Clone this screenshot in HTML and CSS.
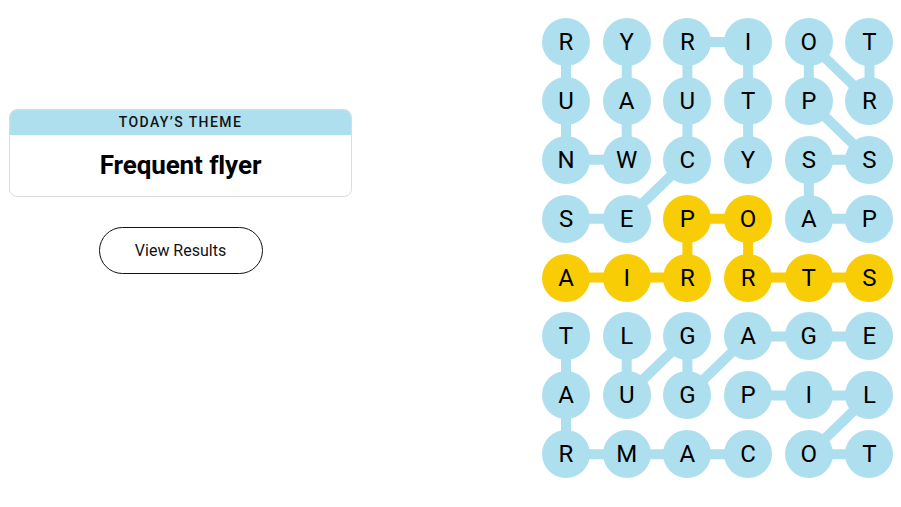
FILE: index.html
```html
<!DOCTYPE html>
<html lang="en">
<head>
<meta charset="utf-8">
<title>Strands</title>
<link rel="stylesheet" href="styles.css">
</head>
<body>
<main class="layout">
  <section class="side">
    <div class="theme-card">
      <div class="theme-head">Today’s Theme</div>
      <div class="theme-body">Frequent flyer</div>
    </div>
    <button class="results-btn" type="button">View Results</button>
  </section>

  <section class="board">
    <svg class="links" width="351.5" height="460.3" viewBox="0 0 351.5 460.3" aria-hidden="true">
      <g class="blue">
        <!-- RUNWAY -->
        <line x1="24" y1="24" x2="24" y2="82.9"/>
        <line x1="24" y1="82.9" x2="24" y2="141.8"/>
        <line x1="24" y1="141.8" x2="84.7" y2="141.8"/>
        <line x1="84.7" y1="141.8" x2="84.7" y2="82.9"/>
        <line x1="84.7" y1="82.9" x2="84.7" y2="24"/>
        <!-- SECURITY -->
        <line x1="24" y1="200.7" x2="84.7" y2="200.7"/>
        <line x1="84.7" y1="200.7" x2="145.4" y2="141.8"/>
        <line x1="145.4" y1="141.8" x2="145.4" y2="82.9"/>
        <line x1="145.4" y1="82.9" x2="145.4" y2="24"/>
        <line x1="145.4" y1="24" x2="206.1" y2="24"/>
        <line x1="206.1" y1="24" x2="206.1" y2="82.9"/>
        <line x1="206.1" y1="82.9" x2="206.1" y2="141.8"/>
        <!-- PASSPORT -->
        <line x1="327.5" y1="200.7" x2="266.8" y2="200.7"/>
        <line x1="266.8" y1="200.7" x2="266.8" y2="141.8"/>
        <line x1="266.8" y1="141.8" x2="327.5" y2="141.8"/>
        <line x1="327.5" y1="141.8" x2="266.8" y2="82.9"/>
        <line x1="266.8" y1="82.9" x2="266.8" y2="24"/>
        <line x1="266.8" y1="24" x2="327.5" y2="82.9"/>
        <line x1="327.5" y1="82.9" x2="327.5" y2="24"/>
        <!-- TARMAC -->
        <line x1="24" y1="318.5" x2="24" y2="377.4"/>
        <line x1="24" y1="377.4" x2="24" y2="436.3"/>
        <line x1="24" y1="436.3" x2="84.7" y2="436.3"/>
        <line x1="84.7" y1="436.3" x2="145.4" y2="436.3"/>
        <line x1="145.4" y1="436.3" x2="206.1" y2="436.3"/>
        <!-- LUGGAGE -->
        <line x1="84.7" y1="318.5" x2="84.7" y2="377.4"/>
        <line x1="84.7" y1="377.4" x2="145.4" y2="318.5"/>
        <line x1="145.4" y1="318.5" x2="145.4" y2="377.4"/>
        <line x1="145.4" y1="377.4" x2="206.1" y2="318.5"/>
        <line x1="206.1" y1="318.5" x2="266.8" y2="318.5"/>
        <line x1="266.8" y1="318.5" x2="327.5" y2="318.5"/>
        <!-- PILOT -->
        <line x1="206.1" y1="377.4" x2="266.8" y2="377.4"/>
        <line x1="266.8" y1="377.4" x2="327.5" y2="377.4"/>
        <line x1="327.5" y1="377.4" x2="266.8" y2="436.3"/>
        <line x1="266.8" y1="436.3" x2="327.5" y2="436.3"/>
      </g>
      <g class="gold">
        <!-- AIRPORTS -->
        <line x1="24" y1="259.6" x2="84.7" y2="259.6"/>
        <line x1="84.7" y1="259.6" x2="145.4" y2="259.6"/>
        <line x1="145.4" y1="259.6" x2="145.4" y2="200.7"/>
        <line x1="145.4" y1="200.7" x2="206.1" y2="200.7"/>
        <line x1="206.1" y1="200.7" x2="206.1" y2="259.6"/>
        <line x1="206.1" y1="259.6" x2="266.8" y2="259.6"/>
        <line x1="266.8" y1="259.6" x2="327.5" y2="259.6"/>
      </g>
    </svg>
    <div class="grid">
      <span class="cell">R</span><span class="cell">Y</span><span class="cell">R</span><span class="cell">I</span><span class="cell">O</span><span class="cell">T</span>
      <span class="cell">U</span><span class="cell">A</span><span class="cell">U</span><span class="cell">T</span><span class="cell">P</span><span class="cell">R</span>
      <span class="cell">N</span><span class="cell">W</span><span class="cell">C</span><span class="cell">Y</span><span class="cell">S</span><span class="cell">S</span>
      <span class="cell">S</span><span class="cell">E</span><span class="cell span">P</span><span class="cell span">O</span><span class="cell">A</span><span class="cell">P</span>
      <span class="cell span">A</span><span class="cell span">I</span><span class="cell span">R</span><span class="cell span">R</span><span class="cell span">T</span><span class="cell span">S</span>
      <span class="cell">T</span><span class="cell">L</span><span class="cell">G</span><span class="cell">A</span><span class="cell">G</span><span class="cell">E</span>
      <span class="cell">A</span><span class="cell">U</span><span class="cell">G</span><span class="cell">P</span><span class="cell">I</span><span class="cell">L</span>
      <span class="cell">R</span><span class="cell">M</span><span class="cell">A</span><span class="cell">C</span><span class="cell">O</span><span class="cell">T</span>
    </div>
  </section>
</main>
</body>
</html>
```

FILE: styles.css
```css
* { box-sizing: border-box; }

html, body {
  margin: 0;
  padding: 0;
  background: #ffffff;
  color: #000000;
  font-family: Roboto, "Liberation Sans", Arial, sans-serif;
}

.layout {
  display: flex;
  align-items: flex-start;
  width: 901px;
  height: 507px;
  overflow: hidden;
}

.side {
  display: flex;
  flex-direction: column;
  align-items: center;
  width: 343px;
  margin-left: 9px;
  margin-top: 109px;
}

.theme-card {
  width: 343px;
  border: 1px solid #dcdcdc;
  border-radius: 8px;
  overflow: hidden;
  background: #ffffff;
}

.theme-head {
  height: 26px;
  margin: -1px -1px 0 -1px;
  background: #aedfee;
  text-align: center;
  text-transform: uppercase;
  font-size: 14px;
  font-weight: 500;
  letter-spacing: 1.4px;
  line-height: 27px;
  color: #121212;
}

.theme-body {
  height: 61px;
  display: flex;
  align-items: center;
  justify-content: center;
  font-size: 26px;
  font-weight: 700;
  letter-spacing: -0.1px;
  padding-bottom: 2px;
}

.results-btn {
  margin-top: 30px;
  width: 164px;
  height: 47px;
  border: 1px solid #121212;
  border-radius: 24px;
  background: #ffffff;
  font-family: Roboto, "Liberation Sans", Arial, sans-serif;
  font-size: 16px;
  color: #121212;
  padding: 0;
}

.board {
  position: relative;
  margin-left: 190px;
  margin-top: 18px;
  width: 351.5px;
  height: 460.3px;
}

.links {
  position: absolute;
  left: 0;
  top: 0;
  z-index: 0;
}

.links line {
  stroke-width: 10;
  stroke-linecap: butt;
}

.links .blue line { stroke: #aedfee; }
.links .gold line { stroke: #f8cd05; }

.grid {
  position: relative;
  z-index: 1;
  display: grid;
  grid-template-columns: repeat(6, 48px);
  grid-template-rows: repeat(8, 48px);
  column-gap: 12.7px;
  row-gap: 10.9px;
}

.cell {
  width: 48px;
  height: 48px;
  border-radius: 50%;
  background: #aedfee;
  display: flex;
  align-items: center;
  justify-content: center;
  font-size: 24px;
  font-weight: 400;
  color: #000000;
  line-height: 1;
}

.cell.span { background: #f8cd05; }
```
